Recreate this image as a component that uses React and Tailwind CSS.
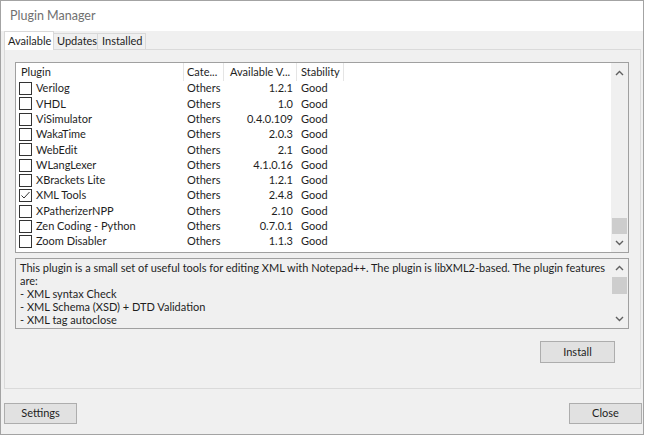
import React from 'react';

const plugins = [
  { name: 'Verilog', version: '1.2.1' },
  { name: 'VHDL', version: '1.0' },
  { name: 'ViSimulator', version: '0.4.0.109' },
  { name: 'WakaTime', version: '2.0.3' },
  { name: 'WebEdit', version: '2.1' },
  { name: 'WLangLexer', version: '4.1.0.16' },
  { name: 'XBrackets Lite', version: '1.2.1' },
  { name: 'XML Tools', version: '2.4.8', checked: true },
  { name: 'XPatherizerNPP', version: '2.10' },
  { name: 'Zen Coding - Python', version: '0.7.0.1' },
  { name: 'Zoom Disabler', version: '1.1.3' },
];

const description = [
  'This plugin is a small set of useful tools for editing XML with Notepad++. The plugin is libXML2-based. The plugin features',
  'are:',
  '- XML syntax Check',
  '- XML Schema (XSD) + DTD Validation',
  '- XML tag autoclose',
];

function Chevron({ up }) {
  return (
    <svg width="9" height="6" viewBox="0 0 9 6">
      <polyline
        points={up ? '1,5 4.5,1.5 8,5' : '1,1 4.5,4.5 8,1'}
        fill="none"
        stroke="#606060"
        strokeWidth="1.4"
      />
    </svg>
  );
}

function Checkbox({ checked }) {
  return (
    <div className="w-[13px] h-[13px] border border-[#333333] bg-white flex items-center justify-center shrink-0">
      {checked && (
        <svg width="11" height="11" viewBox="0 0 11 11">
          <polyline points="1.5,5.5 4,8 9.5,2" fill="none" stroke="#333333" strokeWidth="1" />
        </svg>
      )}
    </div>
  );
}

function Button({ children, className = '' }) {
  return (
    <button type="button" className={`bg-[#e1e1e1] border border-[#adadad] text-[#1e1e1e] text-[11px] flex items-center justify-center ${className}`}>
      {children}
    </button>
  );
}

export default function App() {
  return (
    <div className="w-[648px] h-[437px] bg-white font-['Lato','Noto_Sans',sans-serif] text-[11px] text-[#1e1e1e]">
      <div className="w-[644px] h-[435px] border border-[#a3a3a3] flex flex-col">
        {/* title bar */}
        <div className="h-[30px] bg-white flex items-center pl-[9px] text-[12.5px] text-[#707070]">
          Plugin Manager
        </div>

        <div className="flex-1 bg-[#f0f0f0] flex flex-col">
          {/* tabs */}
          <div className="h-[18px] flex items-end pl-[3px] relative z-10 whitespace-nowrap">
            <div className="h-[19px] -mb-[1px] pl-[3px] w-[50px] bg-white border border-b-0 border-[#d9d9d9] flex items-center">
              Available
            </div>
            <div className="h-[16px] w-[44px] border border-b-0 border-l-0 border-[#d9d9d9] flex items-center pl-[3px]">
              Updates
            </div>
            <div className="h-[16px] w-[48px] border border-b-0 border-l-0 border-[#d9d9d9] flex items-center pl-[4px]">
              Installed
            </div>
          </div>

          {/* tab panel */}
          <div className="ml-[3px] w-[637px] h-[340px] border border-[#dadada] flex flex-col">
            {/* plugin list */}
            <div className="mt-[12px] ml-[10px] w-[614px] h-[191px] border border-[#a0a0a0] bg-white flex">
              <div className="flex-1 flex flex-col">
                <div className="h-[18px] flex items-center shrink-0 whitespace-nowrap">
                  <div className="w-[168px] h-full border-r border-[#e5e5e5] pl-[5px] flex items-center">Plugin</div>
                  <div className="w-[40px] h-full border-r border-[#e5e5e5] pl-[3px] flex items-center overflow-hidden">Cate...</div>
                  <div className="w-[73px] h-full border-r border-[#e5e5e5] pl-[6px] flex items-center overflow-hidden">Available V...</div>
                  <div className="w-[47px] h-full border-r border-[#e5e5e5] pl-[4px] flex items-center">Stability</div>
                </div>
                {plugins.map((p) => (
                  <div key={p.name} className="h-[15.3px] flex items-center shrink-0 whitespace-nowrap">
                    <div className="w-[168px] pl-[3px] flex items-center gap-[4px]">
                      <Checkbox checked={p.checked} />
                      <span>{p.name}</span>
                    </div>
                    <div className="w-[40px] pl-[3px]">Others</div>
                    <div className="w-[73px] pr-[4px] text-right">{p.version}</div>
                    <div className="w-[47px] pl-[4px]">Good</div>
                  </div>
                ))}
              </div>
              <div className="w-[17px] bg-[#f0f0f0] flex flex-col items-center">
                <div className="h-[19px] flex items-center justify-center"><Chevron up /></div>
                <div className="flex-1" />
                <div className="w-[15px] h-[16px] bg-[#cdcdcd]" />
                <div className="h-[18px] flex items-center justify-center"><Chevron /></div>
              </div>
            </div>

            {/* description */}
            <div className="mt-[5px] ml-[10px] w-[614px] h-[71px] border border-[#a0a0a0] flex">
              <div className="flex-1 pl-[4px] pt-[2px] leading-[13px] overflow-hidden">
                {description.map((line) => (
                  <div key={line} className="whitespace-nowrap">{line}</div>
                ))}
              </div>
              <div className="w-[17px] flex flex-col items-center">
                <div className="h-[18px] flex items-center justify-center"><Chevron up /></div>
                <div className="w-[15px] h-[17px] bg-[#cdcdcd]" />
                <div className="flex-1" />
                <div className="h-[18px] flex items-center justify-center"><Chevron /></div>
              </div>
            </div>

            <div className="mt-[12px] flex justify-end pr-[25px]">
              <Button className="w-[75px] h-[22px]">Install</Button>
            </div>
          </div>

          {/* bottom buttons */}
          <div className="mt-[14px] flex justify-between pl-[3px] pr-[1px]">
            <Button className="w-[73px] h-[21px]">Settings</Button>
            <Button className="w-[73px] h-[21px]">Close</Button>
          </div>
        </div>
      </div>
    </div>
  );
}
